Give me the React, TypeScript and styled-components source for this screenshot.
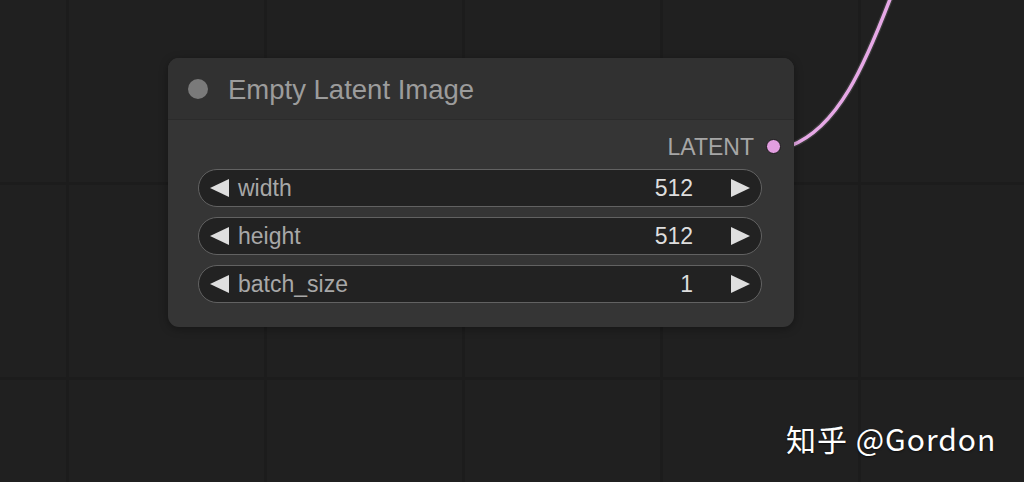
import React from "react";
import styled, { createGlobalStyle } from "styled-components";

const Global = createGlobalStyle`
  html, body { margin: 0; padding: 0; background: #202020; }
  #root { width: 1024px; height: 482px; }
`;

const Canvas = styled.div`
  position: relative;
  width: 1024px;
  height: 482px;
  overflow: hidden;
  background-color: #202020;
  background-image:
    linear-gradient(to right, #1c1c1c 0, #1c1c1c 3px, transparent 3px),
    linear-gradient(to bottom, #1c1c1c 0, #1c1c1c 3px, transparent 3px);
  background-size: 198px 100%, 100% 195px;
  background-position: 66px 0, 0 182px;
  font-family: "Liberation Sans", Arial, sans-serif;
`;

const Node = styled.div`
  position: absolute;
  left: 168px;
  top: 58px;
  width: 626px;
  height: 269px;
  border-radius: 11px;
  background: #353535;
  box-shadow: 0 2px 8px rgba(0, 0, 0, 0.35);
  display: flex;
  flex-direction: column;
  overflow: hidden;
`;

const Title = styled.div`
  height: 62px;
  box-sizing: border-box;
  background: #313131;
  border-bottom: 1px solid #2b2b2b;
  display: flex;
  align-items: center;
  padding-left: 20px;
  padding-top: 2px;
  gap: 20px;
`;

const TitleDot = styled.div`
  width: 20px;
  height: 20px;
  border-radius: 50%;
  background: #7a7a7a;
  margin-top: -2px;
`;

const TitleText = styled.span`
  font-size: 27.5px;
  color: #9c9c9c;
`;

const Body = styled.div`
  display: flex;
  flex-direction: column;
  padding: 6px 32px 0 30px;
`;

const OutputRow = styled.div`
  height: 43px;
  display: flex;
  align-items: center;
  justify-content: flex-end;
  margin-right: -32px;
  padding-right: 13px;
  gap: 12px;
`;

const OutputLabel = styled.span`
  font-size: 23px;
  color: #a6a6a6;
`;

const OutputDot = styled.div`
  width: 15px;
  height: 15px;
  border-radius: 50%;
  background: #e29ee0;
  border: 1.5px solid #1a1a1a;
  box-sizing: border-box;
  margin-top: -2px;
`;

const Widgets = styled.div`
  display: flex;
  flex-direction: column;
  gap: 10px;
`;

const Widget = styled.div`
  height: 38px;
  box-sizing: border-box;
  border-radius: 19px;
  border: 1.5px solid #626262;
  background: #222222;
  display: flex;
  align-items: center;
  padding: 0 11px 0 11px;
`;

const Arrow = styled.div<{ $dir: "left" | "right" }>`
  width: 0;
  height: 0;
  border-top: 9px solid transparent;
  border-bottom: 9px solid transparent;
  ${(p) =>
    p.$dir === "left"
      ? "border-right: 19px solid #dedede;"
      : "border-left: 19px solid #dedede;"}
`;

const WLabel = styled.span`
  font-size: 23px;
  color: #a8a8a8;
  margin-left: 9px;
  flex: 1;
`;

const WValue = styled.span`
  font-size: 23px;
  color: #dedede;
  margin-right: 38px;
`;

const Wire = styled.svg`
  position: absolute;
  left: 0;
  top: 0;
  pointer-events: none;
`;

const Watermark = styled.div`
  position: absolute;
  left: 786px;
  top: 416px;
  font-family: "Noto Sans CJK SC", "Noto Sans", sans-serif;
  font-size: 30px;
  letter-spacing: 1px;
  color: #ffffff;
  line-height: 44px;
  white-space: nowrap;
  text-shadow: 0 1px 2px rgba(0,0,0,0.6);
`;

const widgets = [
  { label: "width", value: "512" },
  { label: "height", value: "512" },
  { label: "batch_size", value: "1" },
];

export default function App() {
  return (
    <>
      <Global />
      <Canvas>
        <Wire width={1024} height={482}>
          <path d="M 790 146 C 838 128, 865 65, 892 -6" fill="none" stroke="#3a3a3a" strokeWidth={6} />
          <path d="M 790 146 C 838 128, 865 65, 892 -6" fill="none" stroke="#e6a8e6" strokeWidth={3.5} />
        </Wire>
        <Node>
          <Title>
            <TitleDot />
            <TitleText>Empty Latent Image</TitleText>
          </Title>
          <Body>
            <OutputRow>
              <OutputLabel>LATENT</OutputLabel>
              <OutputDot />
            </OutputRow>
            <Widgets>
              {widgets.map((w) => (
                <Widget key={w.label}>
                  <Arrow $dir="left" />
                  <WLabel>{w.label}</WLabel>
                  <WValue>{w.value}</WValue>
                  <Arrow $dir="right" />
                </Widget>
              ))}
            </Widgets>
          </Body>
        </Node>
        <Watermark>知乎 @Gordon</Watermark>
      </Canvas>
    </>
  );
}
